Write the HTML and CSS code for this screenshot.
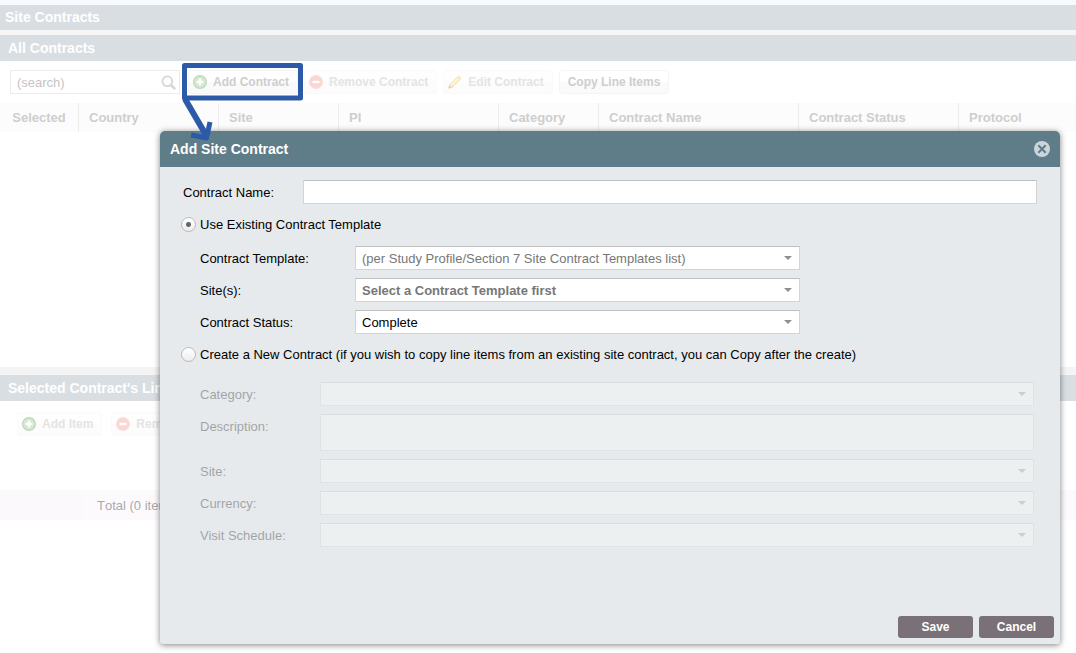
FILE: index.html
```html
<!DOCTYPE html>
<html lang="en">
<head>
<meta charset="utf-8">
<meta name="viewport" content="width=device-width, initial-scale=1">
<title>Site Contracts</title>
<link rel="stylesheet" href="styles.css">
</head>
<body>
<svg class="defs" width="0" height="0" aria-hidden="true">
  <symbol id="icon-add" viewBox="0 0 14 14">
    <circle cx="7" cy="7" r="6.4" fill="#d3e9d1" stroke="#bdd8bb" stroke-width="1.2"/>
    <path d="M7 3.6v6.8M3.6 7h6.8" stroke="#fff" stroke-width="2.4" fill="none"/>
  </symbol>
  <symbol id="icon-remove" viewBox="0 0 14 14">
    <circle cx="7" cy="7" r="6.4" fill="#fad6d5" stroke="#f7deda" stroke-width="1.2"/>
    <path d="M3.4 7h7.2" stroke="#fff" stroke-width="2.4" fill="none"/>
  </symbol>
  <symbol id="icon-edit" viewBox="0 0 16 16">
    <path d="M2 11 11.2 1.8q1-.9 2 0l1 1q.9 1 0 2L5 14l-4 1z" fill="#fdf0bd" stroke="#f0e0b8" stroke-width="1"/>
    <path d="M3.4 12 11 4.3" stroke="#fffbe6" stroke-width="1.2"/>
    <path d="m10.800 2.300 3 3" stroke="#f6e2c0" stroke-width="1"/>
    <path d="M2 11l3 3-4 1z" fill="#f8ecdc" stroke="#e2d5c6" stroke-width=".8"/>
    <path d="m1 15 .6-2 1.400 1.400z" fill="#bbb"/>
  </symbol>
</svg>

<main class="page">
  <h1 class="bar bar-page">Site Contracts</h1>

  <section class="panel">
    <h2 class="bar">All Contracts</h2>
    <div class="toolbar">
      <div class="search">
        <input type="text" placeholder="(search)" aria-label="Search contracts">
        <svg class="search-icon" viewBox="0 0 15 15" aria-hidden="true"><circle cx="6.300" cy="6.300" r="4.900" fill="none" stroke="#d6d6d6" stroke-width="1.800"/><path d="m10 10 3.400 3.400" stroke="#d6d6d6" stroke-width="2.600" stroke-linecap="round"/></svg>
      </div>
      <div class="callout">
        <button class="tool" type="button"><svg class="icon"><use href="#icon-add"/></svg>Add Contract</button>
        <svg class="callout-mark" viewBox="0 0 121 80" fill="none" stroke="#2c5aa8" stroke-width="5" aria-hidden="true">
          <path d="M2.500 2.500h116v32.500H2.500z" stroke-linejoin="round"/>
          <path d="M3 36 24 72" stroke-width="6"/>
          <path d="M9 72 24.500 75 28 59" stroke-linejoin="round"/>
        </svg>
      </div>
      <button class="tool faint" type="button"><svg class="icon"><use href="#icon-remove"/></svg>Remove Contract</button>
      <button class="tool faint" type="button"><svg class="icon"><use href="#icon-edit"/></svg>Edit Contract</button>
      <button class="tool text-only" type="button">Copy Line Items</button>
    </div>
    <div class="list">
      <table class="grid">
        <colgroup><col class="w-selected"><col class="w-country"><col class="w-site"><col class="w-pi"><col class="w-category"><col class="w-name"><col class="w-status"><col></colgroup>
        <thead>
          <tr><th>Selected</th><th>Country</th><th>Site</th><th>PI</th><th>Category</th><th>Contract Name</th><th>Contract Status</th><th>Protocol</th></tr>
        </thead>
      </table>
    </div>
  </section>

  <section class="panel panel-items">
    <h2 class="bar">Selected Contract's Line Items</h2>
    <div class="toolbar toolbar-items">
      <button class="tool faint" type="button"><svg class="icon"><use href="#icon-add"/></svg>Add Item</button>
      <button class="tool faint" type="button"><svg class="icon"><use href="#icon-remove"/></svg>Remove Item</button>
    </div>
    <div class="totals"><span class="totals-lead"></span><span class="totals-text">Total (0 items)</span></div>
  </section>
</main>

<form class="dialog" role="dialog" aria-labelledby="dialog-title">
  <header class="dialog-head">
    <h2 id="dialog-title">Add Site Contract</h2>
    <button class="close" type="button" aria-label="Close">
      <svg viewBox="0 0 16 16" aria-hidden="true"><circle cx="8" cy="8" r="8" fill="#cbd5da"/><path d="m4.300 4.300 7.400 7.400M11.700 4.300l-7.400 7.400" stroke="#5f7c89" stroke-width="2"/></svg>
    </button>
  </header>
  <div class="dialog-body">
    <div class="row row-name">
      <label for="name">Contract Name:</label>
      <input class="field" id="name" type="text">
    </div>

    <div class="choice">
      <input type="radio" name="source" id="existing" checked>
      <label for="existing">Use Existing Contract Template</label>
    </div>
    <div class="group">
      <div class="row">
        <label for="template">Contract Template:</label>
        <span class="select"><select class="field muted" id="template"><option>(per Study Profile/Section 7 Site Contract Templates list)</option></select></span>
      </div>
      <div class="row">
        <label for="sites">Site(s):</label>
        <span class="select"><select class="field muted strong" id="sites"><option>Select a Contract Template first</option></select></span>
      </div>
      <div class="row">
        <label for="status">Contract Status:</label>
        <span class="select"><select class="field" id="status"><option>Complete</option></select></span>
      </div>
    </div>

    <div class="choice">
      <input type="radio" name="source" id="new">
      <label for="new">Create a New Contract (if you wish to copy line items from an existing site contract, you can Copy after the create)</label>
    </div>
    <div class="group group-new">
      <div class="row">
        <label for="category">Category:</label>
        <span class="select"><select class="field" id="category" disabled></select></span>
      </div>
      <div class="row">
        <label for="description">Description:</label>
        <textarea class="field" id="description" disabled></textarea>
      </div>
      <div class="row">
        <label for="site">Site:</label>
        <span class="select"><select class="field" id="site" disabled></select></span>
      </div>
      <div class="row">
        <label for="currency">Currency:</label>
        <span class="select"><select class="field" id="currency" disabled></select></span>
      </div>
      <div class="row">
        <label for="schedule">Visit Schedule:</label>
        <span class="select"><select class="field" id="schedule" disabled></select></span>
      </div>
    </div>
  </div>
  <footer class="dialog-foot">
    <button class="action" type="submit">Save</button>
    <button class="action" type="button">Cancel</button>
  </footer>
</form>
</body>
</html>
```

FILE: styles.css
```css
* {
  box-sizing: border-box;
}

body {
  margin: 0;
  background: #fff;
  color: #000;
  font: 13px/16px "Liberation Sans", Arial, sans-serif;
}

h1,
h2 {
  margin: 0;
  font-size: 14px;
  line-height: 26px;
}

button,
input,
select,
textarea {
  font: inherit;
}

.defs {
  position: absolute;
}

/* Page behind the dialog */

.page {
  border-top: 5px solid #f6faff;
}

.bar {
  padding-left: 8px;
  background: #d9dee2;
  color: #fff;
}

.bar-page {
  padding-left: 5px;
  line-height: 25px;
}

.panel {
  border-top: 5px solid #f6f6f6;
}

.panel-items {
  border-top: 8px solid #f4f4f4;
}

.toolbar {
  display: flex;
  align-items: center;
  gap: 6px;
  height: 42px;
  padding-left: 10px;
}

.toolbar-items {
  gap: 9px;
  height: 46px;
  padding-left: 17px;
}

.search {
  position: relative;
  width: 170px;
  margin-right: 2px;
}

.search input {
  display: block;
  width: 100%;
  height: 24px;
  padding: 0 24px 0 6px;
  border: 1px solid #ececec;
  background: #fff;
}

.search input::placeholder {
  color: #c4c4c4;
  opacity: 1;
}

.search-icon {
  position: absolute;
  top: 5px;
  right: 4px;
  width: 15px;
  height: 15px;
}

.tool {
  display: flex;
  align-items: center;
  gap: 6px;
  height: 24px;
  padding: 0 8px 0 4px;
  border: 1px solid #f5f5f5;
  border-radius: 3px;
  background: linear-gradient(#fff 0 50%, #fafafa 50%);
  color: #cecece;
  font-size: 12px;
  font-weight: bold;
  white-space: nowrap;
}

.faint {
  border-color: #fafafa;
  background: linear-gradient(#fefefe 0 50%, #fcfcfc 50%);
  color: #e4e4e4;
}

.text-only {
  padding: 0 8px;
}

.icon {
  width: 14px;
  height: 14px;
}

.callout {
  position: relative;
}

.callout-mark {
  position: absolute;
  z-index: 2;
  top: -7px;
  left: -6px;
  width: 121px;
  height: 80px;
  pointer-events: none;
}

.list {
  min-height: 264px;
}

.grid {
  width: 100%;
  border-spacing: 0;
  table-layout: fixed;
}

.grid th {
  height: 29px;
  padding: 0 10px;
  border-right: 1px solid #ededed;
  background: #fcfcfc;
  color: #cecece;
  text-align: left;
}

.grid th:first-child {
  text-align: center;
}

.grid th:last-child {
  border-right: 0;
}

.w-selected {
  width: 79px;
}

.w-country {
  width: 140px;
}

.w-site {
  width: 120px;
}

.w-pi,
.w-status {
  width: 160px;
}

.w-category {
  width: 100px;
}

.w-name {
  width: 200px;
}

.totals {
  display: flex;
  margin-top: 43px;
  background: #fdfafe;
  color: #aaa;
  font-kerning: none;
}

.totals-lead {
  width: 83px;
  background: #fcf9fd;
}

.totals-text {
  padding: 2px 0 0 14px;
  line-height: 28px;
}

/* Dialog */

.dialog {
  position: absolute;
  z-index: 1;
  top: 131px;
  right: 16px;
  left: 160px;
  border-radius: 5px 5px 3px 3px;
  background: #e6eaed;
  box-shadow: 0 1px 6px rgba(0, 0, 0, 0.5);
}

.dialog-head {
  display: flex;
  align-items: center;
  justify-content: space-between;
  height: 36px;
  padding: 0 10px;
  border-radius: 5px 5px 0 0;
  background: #5f7c89;
  color: #fff;
}

.close {
  width: 16px;
  height: 16px;
  padding: 0;
  border: 0;
  background: none;
}

.close svg {
  display: block;
}

.dialog-body {
  padding: 13px 23px 0 21px;
}

.row {
  display: flex;
}

.row label {
  flex: none;
  width: 155px;
  padding-top: 2px;
  line-height: 22px;
}

.row-name {
  padding-left: 2px;
}

.row-name label {
  width: 120px;
}

.field {
  display: block;
  width: 100%;
  height: 24px;
  padding: 2px 6px 0;
  border: 1px solid #d4d4d4;
  border-top-color: #bfbfbf;
  border-radius: 0;
  background: #fff;
  color: #000;
  appearance: none;
}

textarea.field {
  height: 37px;
  resize: none;
}

.muted {
  color: #777;
}

.strong {
  font-weight: bold;
}

.select {
  position: relative;
  width: 445px;
}

.select::after {
  content: "";
  position: absolute;
  top: 10px;
  right: 8px;
  border: 4px solid transparent;
  border-top-color: #909090;
  border-bottom: 0;
  pointer-events: none;
}

.choice {
  display: flex;
  align-items: center;
  gap: 4px;
  height: 24px;
  margin-top: 8px;
}

.choice label {
  padding-top: 2px;
}

.choice input {
  width: 15px;
  height: 15px;
  margin: 0;
  border: 1px solid #b9b9b9;
  border-radius: 50%;
  background: linear-gradient(#fff, #eee);
  appearance: none;
}

.choice input:checked {
  background: radial-gradient(circle, #666 0 2px, transparent 3px), linear-gradient(#fff, #eee);
}

.group {
  display: grid;
  gap: 8px;
  margin-top: 10px;
  padding-left: 19px;
}

.group-new {
  margin-top: 16px;
  padding-right: 3px;
  opacity: 0.3;
}

.group-new label {
  width: 120px;
}

.group-new .select {
  flex: 1;
}

.group-new .field {
  background: #fafffd;
  opacity: 1;
}

.dialog-foot {
  display: flex;
  justify-content: flex-end;
  gap: 6px;
  margin-top: 69px;
  padding: 0 6px 6px;
}

.action {
  width: 75px;
  height: 22px;
  padding: 0;
  border: 0;
  border-radius: 3px;
  background: #7a7178;
  color: #fff;
  font-size: 12px;
  font-weight: bold;
}
```
